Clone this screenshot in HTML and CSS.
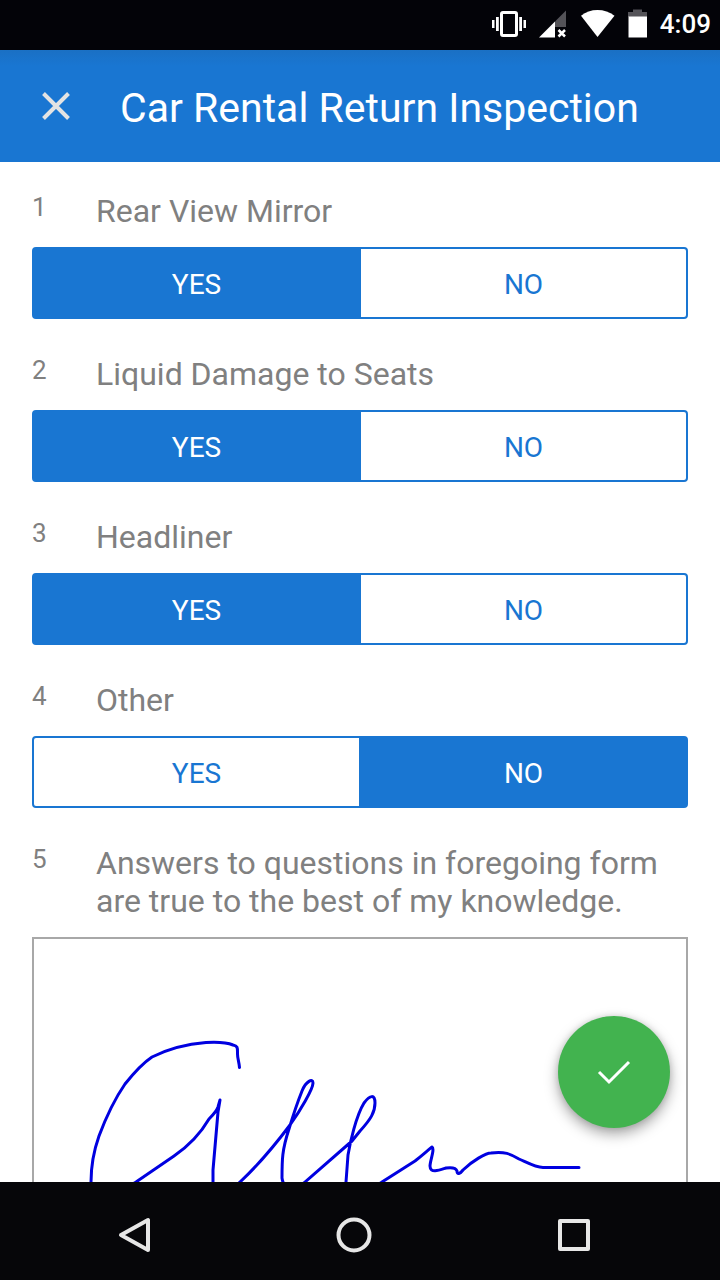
FILE: index.html
```html
<!DOCTYPE html>
<html lang="en">
<head>
  <meta charset="UTF-8" />
  <meta name="viewport" content="width=device-width, initial-scale=1.0"/>
  <title>Car Rental Return Inspection</title>
  <link rel="stylesheet" href="styles.css">
</head>
<body>

  <div class="status-bar">
    <svg width="34" height="30" viewBox="492 8 34 30" fill="#fff">
      <rect x="501.5" y="11.5" width="15" height="23" rx="1.5" fill="none" stroke="#fff" stroke-width="3"/>
      <path d="M492 19h2.5v8H492zM496 16h2.8v14H496zM519.2 16h2.8v14h-2.8zM523.5 19h2.5v8h-2.5z"/>
    </svg>
    <svg width="28" height="30" viewBox="539 8 28 30">
      <path d="M566 9.500V26H555V20.500z" fill="#545358"/>
      <path d="M555 20.500V36.500H539z" fill="#fff"/>
      <path d="M558.500 29l6.500 6.500M565 29l-6.500 6.500" stroke="#fff" stroke-width="2.500"/>
    </svg>
    <svg width="35" height="30" viewBox="580 8 35 30">
      <path d="M597.500 36L581 14.800Q588 9 597.500 9T614.500 14.800z" fill="#fff"/>
    </svg>
    <svg width="19" height="30" viewBox="628 8 19 30">
      <path d="M628 11h5V8.500h9V11h5v5h-19z" fill="#545358"/>
      <path d="M628.500 15.500h18.500v21h-18.500z" fill="#fff"/>
    </svg>
    <span class="clock">4:09</span>
  </div>

  <header class="toolbar">
    <button class="close-btn" type="button" aria-label="Close">
      <svg width="32" height="32" viewBox="0 0 32 32" fill="none" stroke="#e3e3e3" stroke-width="4">
        <path d="M3.500 3.500l25 25M28.500 3.500l-25 25"/>
      </svg>
    </button>
    <h1>Car Rental Return Inspection</h1>
  </header>

  <div class="content">
    <form class="form">
      <section class="question">
        <div class="prompt"><span class="number">1</span><h2 id="q1">Rear View Mirror</h2></div>
        <div class="toggle" role="radiogroup" aria-labelledby="q1">
          <input type="radio" name="mirror" id="mirror-yes" checked><label for="mirror-yes">YES</label>
          <input type="radio" name="mirror" id="mirror-no"><label for="mirror-no">NO</label>
        </div>
      </section>

      <section class="question">
        <div class="prompt"><span class="number">2</span><h2 id="q2">Liquid Damage to Seats</h2></div>
        <div class="toggle" role="radiogroup" aria-labelledby="q2">
          <input type="radio" name="seats" id="seats-yes" checked><label for="seats-yes">YES</label>
          <input type="radio" name="seats" id="seats-no"><label for="seats-no">NO</label>
        </div>
      </section>

      <section class="question">
        <div class="prompt"><span class="number">3</span><h2 id="q3">Headliner</h2></div>
        <div class="toggle" role="radiogroup" aria-labelledby="q3">
          <input type="radio" name="headliner" id="headliner-yes" checked><label for="headliner-yes">YES</label>
          <input type="radio" name="headliner" id="headliner-no"><label for="headliner-no">NO</label>
        </div>
      </section>

      <section class="question">
        <div class="prompt"><span class="number">4</span><h2 id="q4">Other</h2></div>
        <div class="toggle" role="radiogroup" aria-labelledby="q4">
          <input type="radio" name="other" id="other-yes"><label for="other-yes">YES</label>
          <input type="radio" name="other" id="other-no" checked><label for="other-no">NO</label>
        </div>
      </section>

      <section class="question">
        <div class="prompt"><span class="number">5</span><h2>Answers to questions in foregoing form are true to the best of my knowledge.</h2></div>
        <div class="signature">
          <svg viewBox="34 939 652 326" fill="none" stroke="#0000e0" stroke-width="3" stroke-linecap="round" stroke-linejoin="round">
            <path d="M239.500 1067.500C239 1062 237.500 1058 237.500 1054C237.500 1048 238 1046 233 1045C226 1042 215 1042 206 1042.500C187 1044 166 1050 152 1057C143 1063 133 1074 125 1084C114 1100 105 1120 99 1136C93 1153 91 1168 91 1182C92 1196 108 1199 136 1182L174 1156C190 1145 202 1131 209 1119C214 1114 217 1110 218 1107L220 1100L218 1112L213 1170V1182C213 1200 222 1200 240 1182C254 1169 275 1145 290 1125C300 1111 313 1089 313 1083C313 1078 306 1081 302 1091C296 1106 292 1119 289 1129C282 1150 282 1160 282 1178C284 1192 296 1190 305 1182L352 1141L360 1131C371 1119 375 1112 375 1103C375 1094 370 1095 364 1103C356 1116 350 1143 348 1155L346 1182C345 1200 362 1195 382 1182L415 1161C425 1153 428 1150 432 1147C435 1149 430 1161 430 1166C430 1174 440 1170 446 1168C453 1167 456 1168 457 1171C457 1175 460 1174 463 1170C472 1161 486 1153 491 1153C504 1151 511 1154 519 1159C530 1164 536 1167.500 543 1167.500H579"/>
          </svg>
        </div>
      </section>
    </form>

    <button class="fab" type="button" aria-label="Submit">
      <svg width="34" height="26" viewBox="0 0 34 26" fill="none" stroke="#fff" stroke-width="3">
        <path d="M2 13l10 10L32 3"/>
      </svg>
    </button>
  </div>

  <nav class="nav-bar">
    <button type="button" aria-label="Back">
      <svg width="36" height="36" viewBox="0 0 36 36"><path d="M32 3v30L5 18z"/></svg>
    </button>
    <button type="button" aria-label="Home">
      <svg width="36" height="36" viewBox="0 0 36 36"><circle cx="18" cy="18" r="15.5"/></svg>
    </button>
    <button type="button" aria-label="Recent apps">
      <svg width="36" height="36" viewBox="0 0 36 36"><rect x="4" y="4" width="28" height="28"/></svg>
    </button>
  </nav>

</body>
</html>
```
FILE: styles.css
```css
:root {
  --primary: #1976d2;
  --accent: #42b34f;
  --text: #808080;
  --black: #030308;
}

* {
  box-sizing: border-box;
}

body {
  margin: 0;
  height: 100vh;
  display: flex;
  flex-direction: column;
  font-family: Roboto, sans-serif;
  background: #fff;
  color: var(--text);
}

button {
  display: flex;
  align-items: center;
  justify-content: center;
  padding: 0;
  border: none;
  background: none;
  cursor: pointer;
}

h1, h2 {
  margin: 0;
  font-weight: 400;
}

.status-bar {
  display: flex;
  flex: none;
  align-items: center;
  justify-content: flex-end;
  gap: 13px;
  height: 50px;
  padding: 0 9px 2px;
  background: var(--black);
}

.clock {
  color: #fff;
  font-size: 26px;
  font-weight: 500;
}

.toolbar {
  display: flex;
  flex: none;
  align-items: center;
  height: 112px;
  background: linear-gradient(#1a70c4, var(--primary) 16px);
}

.close-btn {
  width: 112px;
  height: 112px;
}

.toolbar h1 {
  padding: 4px 0 0 8px;
  color: #fff;
  font-size: 41px;
  line-height: 48px;
}

.content {
  position: relative;
  flex: 1;
  min-height: 0;
}

.form {
  display: flex;
  flex-direction: column;
  gap: 36px;
  height: 100%;
  padding: 30px 32px;
  overflow: hidden;
}

.question {
  display: flex;
  flex: none;
  flex-direction: column;
  gap: 17px;
}

.prompt {
  display: flex;
}

.number {
  flex: none;
  width: 64px;
  font-size: 26px;
  line-height: 30px;
}

.prompt h2 {
  font-size: 32px;
  line-height: 38px;
}

.toggle {
  display: flex;
  height: 72px;
  border: 2px solid var(--primary);
  border-radius: 4px;
}

.toggle input {
  position: absolute;
  opacity: 0;
}

.toggle label {
  display: flex;
  flex: 1;
  align-items: center;
  justify-content: center;
  padding-top: 2px;
  color: var(--primary);
  font-size: 28px;
  cursor: pointer;
}

.toggle label:first-of-type {
  border-right: 2px solid var(--primary);
}

.toggle input:checked + label {
  background: var(--primary);
  color: #fff;
}

.signature {
  border: 2px solid #a8a8a8;
}

.signature svg {
  display: block;
  width: 100%;
}

.fab {
  position: absolute;
  right: 50px;
  bottom: 54px;
  width: 112px;
  height: 112px;
  border-radius: 50%;
  background: var(--accent);
  box-shadow: 0 6px 14px rgba(0, 0, 0, 0.35), 0 0 6px rgba(0, 0, 0, 0.12);
}

.nav-bar {
  display: flex;
  flex: none;
  justify-content: center;
  height: 98px;
  padding: 8px 12px 0 0;
  background: #060609;
}

.nav-bar button {
  flex: 0 1 220px;
}

.nav-bar svg {
  fill: none;
  stroke: #e6e6e6;
  stroke-width: 4;
  stroke-linejoin: round;
}
```
